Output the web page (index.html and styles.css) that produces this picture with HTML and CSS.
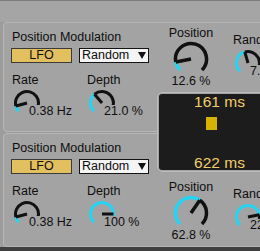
FILE: index.html
```html
<!DOCTYPE html>
<html lang="en">
<head>
  <meta charset="UTF-8" />
  <title>Position Modulation</title>
  <link rel="stylesheet" href="styles.css">
</head>
<body>
  <div class="topbar"></div>

  <div class="device">
    <div class="panel panel-a"></div>
    <div class="panel panel-b"></div>

    <section class="mod mod-a">
      <div class="mod-title">Position Modulation</div>
      <div class="mod-row">
        <button class="lfo">LFO</button>
        <div class="select">Random<span class="arrow"></span></div>
      </div>
      <div class="dials">
        <div class="dial small-dial rate">
          <div class="dial-label">Rate</div>
          <div class="dial-body">
            <svg class="knob" data-v="0.11"></svg>
            <span class="dial-value">0.38 Hz</span>
          </div>
        </div>
        <div class="dial small-dial">
          <div class="dial-label">Depth</div>
          <div class="dial-body">
            <svg class="knob" data-v="0.35"></svg>
            <span class="dial-value">21.0 %</span>
          </div>
        </div>
      </div>
    </section>

    <section class="mod mod-b">
      <div class="mod-title">Position Modulation</div>
      <div class="mod-row">
        <button class="lfo">LFO</button>
        <div class="select">Random<span class="arrow"></span></div>
      </div>
      <div class="dials">
        <div class="dial small-dial rate">
          <div class="dial-label">Rate</div>
          <div class="dial-body">
            <svg class="knob" data-v="0.11"></svg>
            <span class="dial-value">0.38 Hz</span>
          </div>
        </div>
        <div class="dial small-dial">
          <div class="dial-label">Depth</div>
          <div class="dial-body">
            <svg class="knob" data-v="1" data-needle="90"></svg>
            <span class="dial-value">100 %</span>
          </div>
        </div>
      </div>
    </section>

    <div class="side">
      <div class="knob-row upper">
        <div class="dial big-dial">
          <div class="dial-label">Position</div>
          <svg class="knob big" data-v="0.126"></svg>
          <div class="dial-value">12.6 %</div>
        </div>
        <div class="dial small-dial rand">
          <div class="dial-label">Random</div>
          <div class="dial-body">
            <svg class="knob" data-v="0.44"></svg>
            <span class="dial-value">7.0 %</span>
          </div>
        </div>
      </div>

      <div class="display">
        <div class="screen">
          <div class="ms">161 ms</div>
          <div class="marker"></div>
          <div class="ms ms-end">622 ms</div>
        </div>
      </div>

      <div class="knob-row lower">
        <div class="dial big-dial">
          <div class="dial-label">Position</div>
          <svg class="knob big" data-v="0.628"></svg>
          <div class="dial-value">62.8 %</div>
        </div>
        <div class="dial small-dial rand">
          <div class="dial-label">Random</div>
          <div class="dial-body">
            <svg class="knob" data-v="0.79"></svg>
            <span class="dial-value">22.0 %</span>
          </div>
        </div>
      </div>
    </div>
  </div>

  <div class="footer"></div>

  <script>
    // Draw every knob: cyan up to the value, black for the rest, plus a needle
    function point(cx, cy, r, deg) {
      var a = deg * Math.PI / 180;
      return [cx + r * Math.sin(a), cy - r * Math.cos(a)];
    }

    function arc(cx, cy, r, from, to) {
      var p0 = point(cx, cy, r, from);
      var p1 = point(cx, cy, r, to);
      var large = to - from > 180 ? 1 : 0;
      return 'M' + p0[0].toFixed(2) + ' ' + p0[1].toFixed(2) +
             ' A' + r + ' ' + r + ' 0 ' + large + ' 1 ' +
             p1[0].toFixed(2) + ' ' + p1[1].toFixed(2);
    }

    document.querySelectorAll('.knob').forEach(function (svg) {
      var big = svg.classList.contains('big');
      var w = big ? 36 : 26;
      var h = big ? 32 : 28;
      var cx = w / 2;
      var cy = big ? 18 : 14;
      var r = big ? 15.5 : 11.5;
      var sw = big ? 3.5 : 3;
      var v = parseFloat(svg.dataset.v);
      var end = -135 + 270 * v;
      var needle = svg.dataset.needle ? parseFloat(svg.dataset.needle) : end;
      var tip = point(cx, cy, r, needle);

      var html = '';
      if (v > 0) {
        html += '<path d="' + arc(cx, cy, r, -135, end) + '" stroke="#25d3f2" />';
      }
      if (v < 1) {
        html += '<path d="' + arc(cx, cy, r, end, 135) + '" stroke="#111" />';
      }
      html += '<line x1="' + cx + '" y1="' + cy + '" x2="' + tip[0].toFixed(2) +
              '" y2="' + tip[1].toFixed(2) + '" stroke="#111" />';

      svg.setAttribute('viewBox', '0 0 ' + w + ' ' + h);
      svg.setAttribute('width', w);
      svg.setAttribute('height', h);
      svg.setAttribute('fill', 'none');
      svg.setAttribute('stroke-width', sw);
      svg.innerHTML = html;
    });
  </script>
</body>
</html>
```

FILE: styles.css
```css
* {
  box-sizing: border-box;
}

body {
  margin: 0;
  width: 260px;
  height: 251px;
  overflow: hidden;
  background-color: #9c9c9c;
  font-family: 'Liberation Sans', Arial, sans-serif;
  font-size: 12.5px;
  color: #0e0e0e;
}

.topbar {
  height: 22px;
  background-color: #a5a5a5;
  border-top: 1px solid #7c7c7c;
}

.device {
  display: grid;
  grid-template-columns: 154px 143px;
  grid-template-rows: 110px 114px;
  row-gap: 1px;
  width: 300px;
  padding-left: 3px;
}

.panel {
  grid-column: 1 / -1;
  background-color: #a3a3a3;
  border: 1px solid #b6b6b6;
  border-radius: 4px;
}

.panel-a,
.mod-a {
  grid-row: 1;
}

.panel-b,
.mod-b {
  grid-row: 2;
}

.mod {
  grid-column: 1;
  padding: 8px 0 0 9px;
}

.mod-title,
.dial-label {
  line-height: 14px;
  white-space: nowrap;
}

.mod-row {
  display: flex;
  gap: 7px;
  margin-top: 4px;
}

.lfo {
  width: 61px;
  height: 15px;
  margin: 0 0 0 -1px;
  padding: 0;
  border: 1px solid #3a3a3a;
  background-color: #e3c05f;
  font: inherit;
  line-height: 13px;
  color: #0e0e0e;
}

.select {
  display: flex;
  align-items: center;
  justify-content: space-between;
  width: 70px;
  height: 15px;
  padding: 0 2px 0 2px;
  border: 1px solid #141414;
  background-color: #f4f4f4;
  line-height: 13px;
}

.arrow {
  width: 0;
  height: 0;
  border-left: 4.5px solid transparent;
  border-right: 4.5px solid transparent;
  border-top: 7px solid #111;
}

.dials {
  display: flex;
  margin-top: 10px;
}

.dial {
  flex-shrink: 0;
}

.rate {
  width: 75px;
}

.dial-body {
  display: flex;
  align-items: flex-end;
}

.small-dial .knob {
  margin: 2px 0 0 2px;
  flex-shrink: 0;
}

.small-dial .dial-value {
  position: relative;
  margin-left: -11px;
  line-height: 12px;
  white-space: nowrap;
  background-color: #a3a3a3;
}

.side {
  grid-row: 1 / 3;
  grid-column: 2;
  display: flex;
  flex-direction: column;
}

.knob-row {
  display: flex;
  gap: 20px;
  padding-left: 12px;
}

.knob-row.upper {
  height: 70px;
  padding-top: 4px;
}

.knob-row.lower {
  padding-top: 8px;
}

.big-dial {
  width: 44px;
  display: flex;
  flex-direction: column;
  align-items: center;
}

.big-dial .knob {
  margin-top: 1px;
}

.big-dial .dial-value {
  margin-top: 1px;
  line-height: 14px;
  white-space: nowrap;
}

.rand {
  padding-top: 7px;
}

.rand .knob {
  margin-top: 2px;
}

.display {
  width: 125px;
  height: 80px;
  padding: 1px;
  border: 1px solid #bcbcbc;
  border-radius: 5px;
  background-color: #a3a3a3;
}

.screen {
  display: flex;
  flex-direction: column;
  height: 100%;
  background-color: #1c1c1c;
  border-radius: 3px;
}

.ms {
  font-size: 15.5px;
  line-height: 15px;
  color: #f2ce6b;
  text-align: center;
}

.ms-end {
  margin-top: auto;
}

.marker {
  width: 11px;
  height: 13px;
  margin: 8px 0 0 47px;
  background-color: #d5b300;
}

.footer {
  height: 4px;
  background-color: #3f3f3f;
}
```
